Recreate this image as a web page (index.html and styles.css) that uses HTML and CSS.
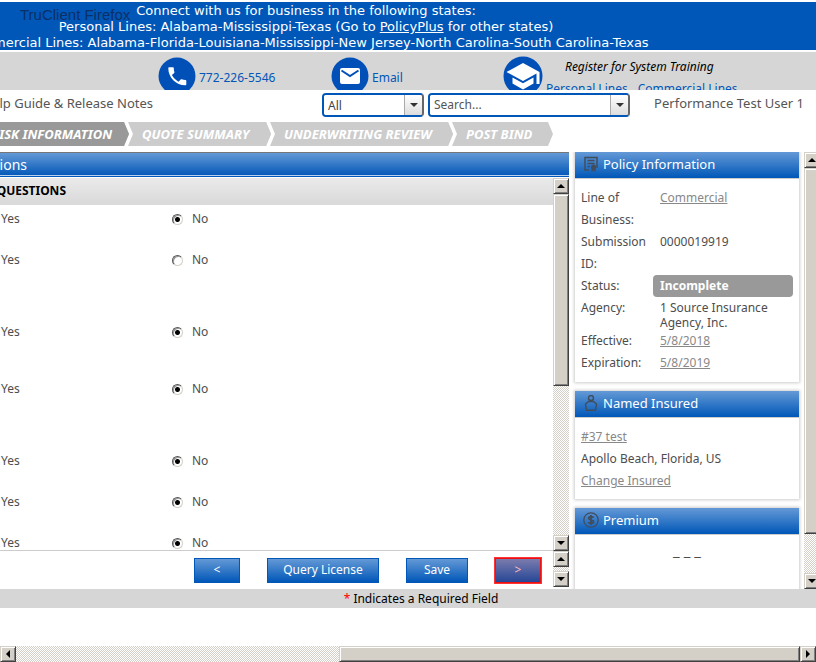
FILE: index.html
```html
<!DOCTYPE html>
<html lang="en">
<head>
<meta charset="utf-8">
<title>Underwriting Questions</title>
<link rel="stylesheet" href="styles.css">
</head>
<body>
<header>
  <div class="banner">
    <p>Connect with us for business in the following states:</p>
    <p>Personal Lines: Alabama-Mississippi-Texas (Go to <a href="#">PolicyPlus</a> for other states)</p>
    <p>Commercial Lines: Alabama-Florida-Louisiana-Mississippi-New Jersey-North Carolina-South Carolina-Texas</p>
    <span class="watermark">TruClient Firefox</span>
  </div>
  <div class="contact">
    <a class="contact-item phone" href="#">
      <svg class="disc" viewBox="0 0 38 38"><circle cx="19" cy="19" r="18.5" fill="#0050b8"/><path transform="translate(7.3 7.3)" fill="#fff" d="M6.6 10.8c1.400 2.800 3.800 5.100 6.600 6.600l2.200-2.200c.3-.3.7-.4 1-.2 1.100.4 2.300.6 3.600.6.6 0 1 .4 1 1V20c0 .6-.4 1-1 1C10.600 21 3 13.400 3 4c0-.6.4-1 1-1h3.500c.6 0 1 .4 1 1 0 1.300.2 2.500.6 3.600.1.3 0 .7-.2 1z"/></svg>
      <span>772-226-5546</span>
    </a>
    <a class="contact-item email" href="#">
      <svg class="disc" viewBox="0 0 38 38"><circle cx="19" cy="19" r="18.500" fill="#0050b8"/><rect x="9" y="11" width="20" height="16" rx="2" fill="#fff"/><path d="M10.500 13.500 19 19l8.500-5.500" fill="none" stroke="#0050b8" stroke-width="2"/></svg>
      <span>Email</span>
    </a>
    <div class="contact-item training">
      <svg class="disc large" viewBox="0 0 40 40"><circle cx="20" cy="20" r="19.500" fill="#0050b8"/><path fill="#fff" d="M20 7 3.500 16 20 25l13.500-7.400V28h3V16zM9.500 21.500v6L20 33.500l10.500-6v-6L20 27.300z"/></svg>
      <div class="training-text">
        <em>Register for System Training</em>
        <nav><a href="#">Personal Lines</a><a href="#">Commercial Lines</a></nav>
      </div>
    </div>
  </div>
  <div class="toolbar">
    <a class="guide" href="#"><span>Help Guide &amp; Release Notes</span></a>
    <form class="search">
      <div class="combo combo-scope">
        <select aria-label="Search scope"><option>All</option></select><i class="drop"></i>
      </div>
      <div class="combo combo-search">
        <input type="text" aria-label="Search" placeholder="Search..."><button type="button" class="drop" aria-label="Show searches"></button>
      </div>
    </form>
    <span class="user">Performance Test User 1</span>
  </div>
  <nav class="steps">
    <a class="step current" href="#"><span>RISK INFORMATION</span></a>
    <a class="step quote" href="#"><span>QUOTE SUMMARY</span></a>
    <a class="step review" href="#"><span>UNDERWRITING REVIEW</span></a>
    <a class="step bind" href="#"><span>POST BIND</span></a>
  </nav>
</header>
<div class="workspace">
  <main>
    <h1 class="title"><span>Questions</span></h1>
    <div class="question-area">
      <div class="question-list">
        <h2><span>QUESTIONS</span></h2>
        <div class="question"><label><input type="radio" name="q1">Yes</label><label><input type="radio" name="q1" checked>No</label></div>
        <div class="question tall"><label><input type="radio" name="q2">Yes</label><label><input type="radio" name="q2">No</label></div>
        <div class="question medium"><label><input type="radio" name="q3">Yes</label><label><input type="radio" name="q3" checked>No</label></div>
        <div class="question tall"><label><input type="radio" name="q4">Yes</label><label><input type="radio" name="q4" checked>No</label></div>
        <div class="question"><label><input type="radio" name="q5">Yes</label><label><input type="radio" name="q5" checked>No</label></div>
        <div class="question"><label><input type="radio" name="q6">Yes</label><label><input type="radio" name="q6" checked>No</label></div>
        <div class="question"><label><input type="radio" name="q7">Yes</label><label><input type="radio" name="q7" checked>No</label></div>
      </div>
      <div class="scroll"><button class="arrow up" aria-label="Scroll up"></button><i class="thumb questions-thumb"></i><i class="track"></i><button class="arrow down" aria-label="Scroll down"></button></div>
    </div>
    <div class="action-area">
      <div class="actions">
        <button class="action small">&lt;</button>
        <button class="action wide">Query License</button>
        <button class="action">Save</button>
        <button class="action small next">&gt;</button>
      </div>
      <div class="scroll short"><button class="arrow up" aria-label="Scroll up"></button><i class="track"></i><button class="arrow down" aria-label="Scroll down"></button></div>
    </div>
  </main>
  <aside>
    <section class="card">
      <h2><svg class="icon" viewBox="0 0 16 16"><path d="M6 14H2V1.500h12V12M4.500 4.500h7M4.500 7.500h7M4.500 10.500H7" fill="none" stroke="#414d5c" stroke-width="1.500"/><circle cx="10.500" cy="11" r="2.500" fill="#414d5c"/><path d="M8.500 11h4v5l-2-1.500-2 1.500z" fill="#414d5c"/></svg>Policy Information</h2>
      <dl>
        <dt>Line of Business:</dt><dd><a href="#">Commercial</a></dd>
        <dt>Submission ID:</dt><dd>0000019919</dd>
        <dt>Status:</dt><dd class="status">Incomplete</dd>
        <dt>Agency:</dt><dd class="agency">1 Source Insurance Agency, Inc.</dd>
        <dt>Effective:</dt><dd><a href="#">5/8/2018</a></dd>
        <dt>Expiration:</dt><dd><a href="#">5/8/2019</a></dd>
      </dl>
    </section>
    <section class="card">
      <h2><svg class="icon" viewBox="0 0 16 16"><g fill="none" stroke="#414d5c" stroke-width="1.400"><circle cx="8" cy="3" r="2.500"/><path d="M5.500 6.500 2.500 9l1 6.300h9l1-6.300-3-2.500z"/></g></svg>Named Insured</h2>
      <div class="insured"><a href="#">#37 test</a><span>Apollo Beach, Florida, US</span><a href="#">Change Insured</a></div>
    </section>
    <section class="card premium">
      <h2><svg class="icon" viewBox="0 0 16 16"><g fill="none" stroke="#414d5c"><circle cx="8" cy="8" r="7.200" stroke-width="1.300"/><path d="M10.600 5.800C10 4.200 5.600 4.200 5.600 6.200c0 2.200 5 1.300 5 3.600 0 2.100-4.600 2-5.200.2M8 3v10" stroke-width="1.800"/></g></svg>Premium</h2>
      <p>_ _ _</p>
    </section>
  </aside>
  <div class="scroll page-scroll"><button class="arrow up" aria-label="Scroll up"></button><i class="thumb page-thumb"></i><i class="track"></i><button class="arrow down" aria-label="Scroll down"></button></div>
</div>
<footer><b>*</b> Indicates a Required Field</footer>
<div class="scroll across"><button class="arrow left" aria-label="Scroll left"></button><i class="track"></i><i class="thumb across-thumb"></i><button class="arrow right" aria-label="Scroll right"></button></div>
</body>
</html>
```
FILE: styles.css
```css
* { box-sizing: border-box; }
body {
  margin: 0;
  min-height: 100vh;
  display: flex;
  flex-direction: column;
  overflow: hidden;
  background: #fff;
  color: #4d4d4d;
  font: 12px/22px "Noto Sans", "Open Sans", sans-serif;
}
p, h1, h2, dl, dd { margin: 0; }
button, input, select { font: inherit; margin: 0; }
a { color: #888; }

.banner {
  position: relative;
  margin: 2px 0;
  height: 48px;
  padding: 1px 204px 0 0;
  display: flex;
  flex-direction: column;
  align-items: center;
  overflow: hidden;
  white-space: nowrap;
  background: #0057b8;
  color: #fff;
  font: 13px/16px "DejaVu Sans", sans-serif;
}
.banner a { color: #fff; }
.watermark {
  position: absolute;
  left: 20px;
  top: 5px;
  color: #0b2f66;
  font: 15px/16px "Liberation Sans", sans-serif;
}

.contact {
  height: 38px;
  display: flex;
  align-items: flex-start;
  overflow: hidden;
  padding-left: 158px;
  background: #d6d6d6;
}
.contact-item {
  display: flex;
  gap: 3px;
  padding-top: 5px;
  color: #0057b8;
  text-decoration: none;
  white-space: nowrap;
}
.contact-item > span { padding-top: 10px; }
.phone { width: 173px; }
.email { width: 172px; }
.disc { width: 38px; height: 38px; flex: none; }
.disc.large { width: 40px; height: 40px; }
.training { padding-top: 4px; }
.training-text { display: flex; flex-direction: column; }
.training em { padding-left: 19px; color: #000; }
.training nav { display: flex; gap: 10px; }
.training a { color: #0057b8; text-decoration: none; }

.toolbar { height: 32px; display: flex; align-items: flex-start; padding-right: 12px; white-space: nowrap; }
.guide, .user { font-size: 13px; line-height: 27px; color: #555; text-decoration: none; }
.guide { width: 153px; display: flex; justify-content: flex-end; overflow: hidden; }
.guide span { flex: none; }
.search { display: flex; gap: 4px; margin: 3px 0 0 169px; }
.combo { height: 24px; display: flex; overflow: hidden; border: 2px solid #0057b8; border-right-color: #666; border-radius: 4px; background: #fff; }
.combo-scope { width: 102px; }
.combo-search { width: 202px; }
.combo select, .combo input { flex: 1; min-width: 0; padding: 0 4px; border: 0; appearance: none; background: #fff; color: #444; outline: 0; }
.combo input::placeholder { color: #555; opacity: 1; }
.drop { width: 18px; padding: 0; display: grid; place-items: center; border: 0; border-left: 1px solid #aaa; background: linear-gradient(#fff, #ddd); }
.drop::before { content: ""; border: 4px solid transparent; border-top-color: #333; border-bottom: 0; }
.user { margin-left: auto; }

.steps { display: flex; height: 24px; margin-bottom: 6px; font: italic bold 13px/24px "Noto Sans", sans-serif; white-space: nowrap; }
.step { position: relative; display: flex; flex: none; margin-left: -6px; padding-left: 18px; background: #ccc; color: #fff; text-decoration: none; clip-path: polygon(0 0, calc(100% - 6px) 0, calc(100% - 1px) 12px, calc(100% - 6px) 100%, 0 100%); }
.step::before { content: ""; position: absolute; left: 0; top: 0; width: 9px; height: 24px; background: #fff; clip-path: polygon(0 0, 4px 0, 9px 12px, 4px 100%, 0 100%, 5px 12px); }
.step.current { z-index: 3; width: 130px; margin: 0; padding: 0 18px 0 0; justify-content: flex-end; overflow: hidden; background: #999; }
.step.current::before { display: none; }
.step.current span { flex: none; }
.quote { z-index: 2; width: 148px; }
.review { z-index: 1; width: 188px; }
.bind { width: 106px; }

.workspace { height: 437px; display: flex; gap: 6px; overflow: hidden; }
main { flex: 1; min-width: 0; display: flex; flex-direction: column; }
.title {
  height: 25px;
  width: 100%;
  border-top: 1px solid #777;
  border-bottom: 1px solid #0057b8;
  background: linear-gradient(#6499d6, #0057b8);
  box-shadow: inset 0 -1px #b9d1ec;
  color: #fff;
  font-size: 14px;
  line-height: 24px;
  font-weight: 400;
}
.title, .question-list h2 { display: flex; overflow: hidden; }
.title span { width: 27px; direction: rtl; white-space: nowrap; }
.question-area { height: 374px; display: flex; padding-top: 1px; }
.question-list { flex: 1; overflow: hidden; border-bottom: 1px solid #ccc; }
.question-list h2 { height: 27px; margin-bottom: 3px; background: linear-gradient(#eaeaea, #d9d9d9); color: #000; font-size: 12px; line-height: 25px; }
.question-list h2 span { width: 66px; direction: rtl; white-space: nowrap; }
.question { display: flex; height: 41px; margin-left: -19px; }
.question label { width: 191px; display: flex; gap: 9px; align-items: flex-start; }
.question.tall { height: 72px; }
.question.medium { height: 57px; }
.question input {
  width: 11px;
  height: 11px;
  margin-top: 6px;
  appearance: none;
  border: 1px solid;
  border-color: #555 #d4d0c8 #d4d0c8 #555;
  border-radius: 50%;
  box-shadow: inset 1px 1px #999;
  background: #fff;
}
.question input:checked { background: radial-gradient(circle, #000 2px, #fff 3px); }
.action-area { height: 38px; display: flex; }
.actions { flex: 1; display: flex; justify-content: flex-end; align-items: center; gap: 27px; padding-right: 12px; }
.action { width: 62px; height: 25px; padding: 0; border: 1px solid #0057b8; background: linear-gradient(#6499d6, #0057b8); color: #fff; }
.action.small { width: 46px; }
.action.wide { width: 112px; }
.action.next { border-color: #e11; outline: 1px solid #f33; background: linear-gradient(#7b7bad, #264796); color: #fbb; }

aside { width: 224px; flex: none; display: flex; flex-direction: column; gap: 9px; }
.card { flex: none; box-shadow: 0 0 3px 1px #ccc; }
.card h2 { height: 27px; display: flex; align-items: center; gap: 4px; padding: 0 8px 2px; border-bottom: 1px solid #ccc; background: linear-gradient(#6499d6, #0057b8); color: #fff; font-size: 13px; font-weight: 400; }
.icon { width: 16px; height: 16px; }
dl { display: grid; grid-template-columns: 72px 140px; padding: 8px 6px; }
dt { padding-right: 4px; }
dd { padding-left: 7px; }
.status { border-radius: 4px; background: #999; color: #fff; font-weight: 700; }
.agency { line-height: 15px; padding: 3px 20px 0 7px; }
.insured { display: flex; flex-direction: column; align-items: flex-start; padding: 8px 6px 7px; }
.premium { height: 100px; }
.premium p { text-align: center; padding-top: 4px; font-size: 15px; }

.scroll { width: 16px; flex: none; display: flex; flex-direction: column; }
.arrow, .thumb { flex: none; padding: 0; background: #d4d0c8; border: 1px solid; border-color: #d4d0c8 #404040 #404040 #d4d0c8; box-shadow: inset 1px 1px #fff, inset -1px -1px #808080; }
.arrow { width: 16px; height: 16px; display: grid; place-items: center; }
.arrow::before { content: ""; border: 4px solid transparent; }
.up::before { border-bottom-color: #000; border-top: 0; }
.down::before { border-top-color: #000; border-bottom: 0; }
.left::before { border-right-color: #000; border-left: 0; }
.right::before { border-left-color: #000; border-right: 0; }
.track { flex: 1; background: repeating-conic-gradient(#d4d0c8 0 25%, #fff 0 50%) 0 0 / 2px 2px; }
.questions-thumb { height: 192px; }
.page-thumb { height: 366px; }
.short { height: 36px; }
.page-scroll { width: 12px; margin-left: -1px; align-items: flex-start; overflow: hidden; }
.page-scroll .thumb, .page-scroll .track { width: 16px; }

footer { height: 19px; padding-left: 26px; text-align: center; background: #d6d6d6; color: #000; line-height: 19px; }
footer b { color: red; font-weight: 400; }
.across { width: 100%; height: 16px; margin-top: auto; flex-direction: row; }
.across-thumb { width: 461px; }
```
